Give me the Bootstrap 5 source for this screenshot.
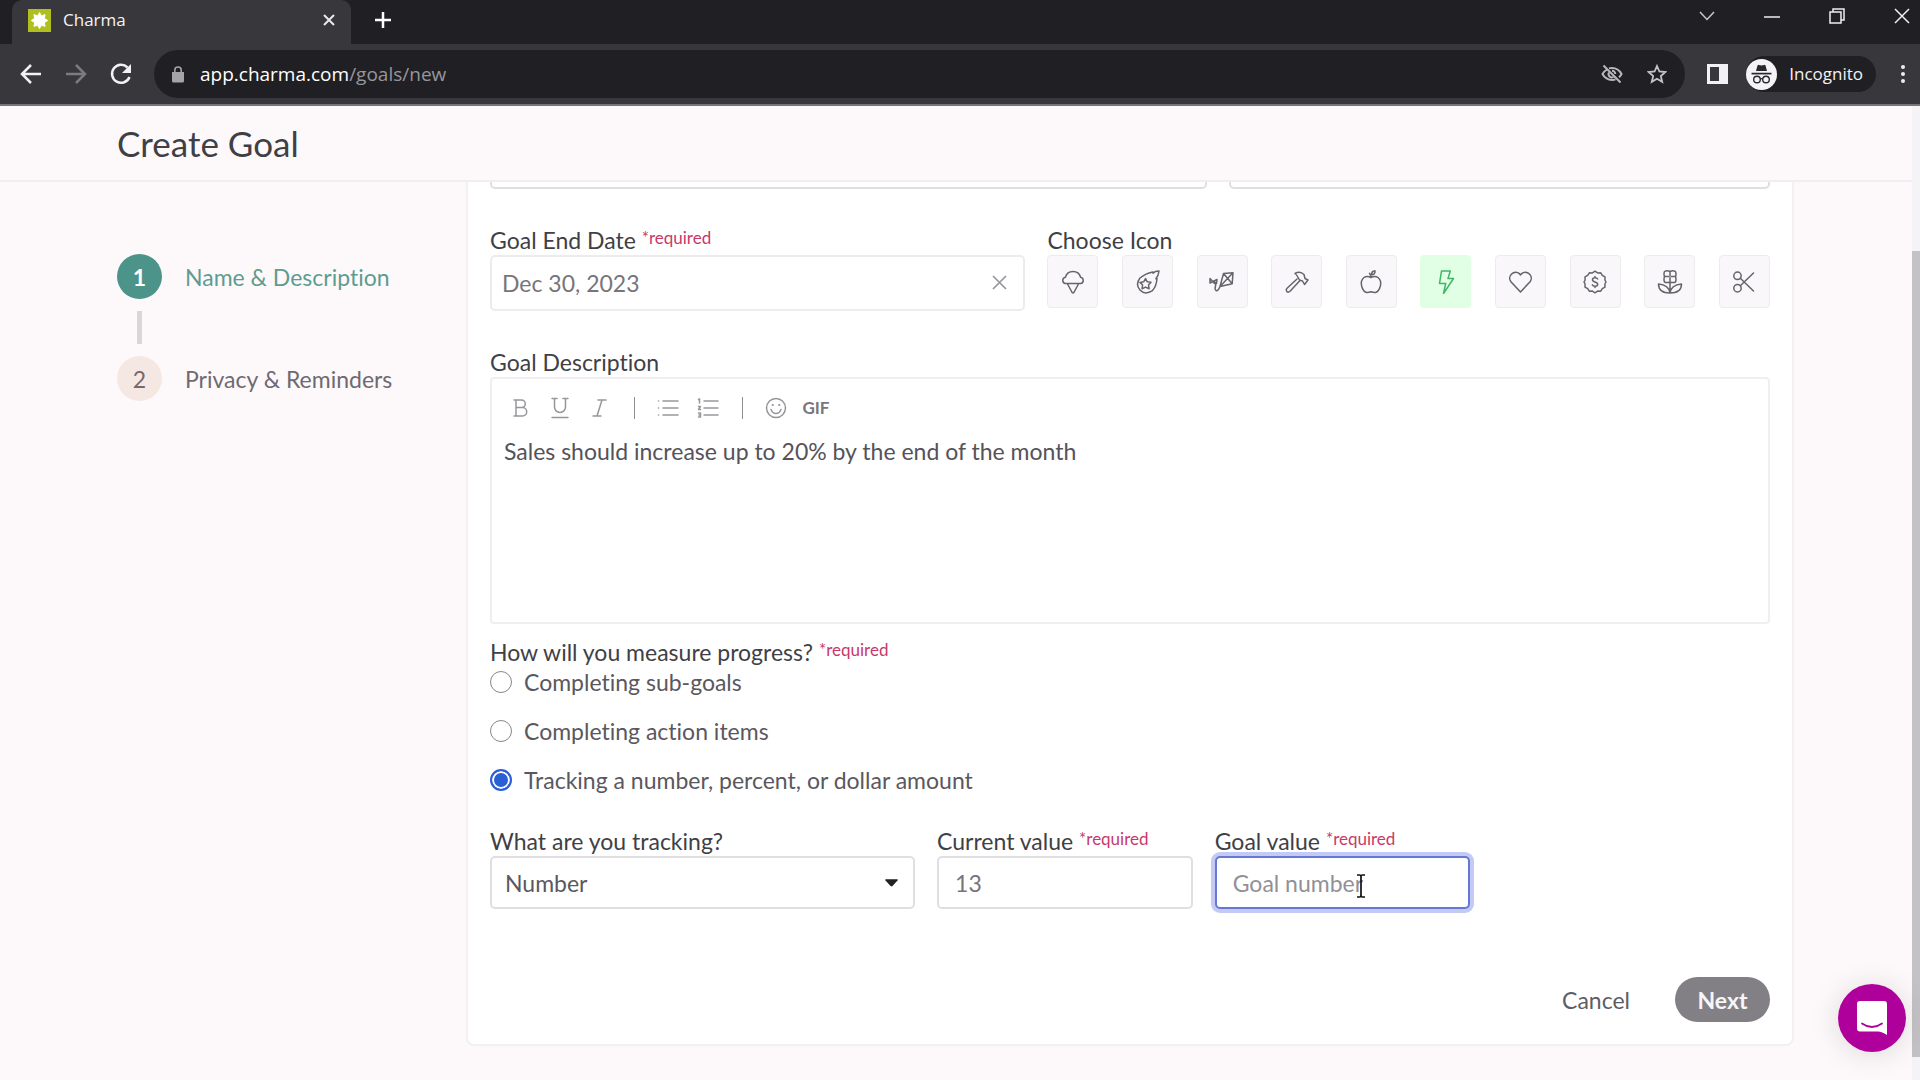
<!DOCTYPE html>
<html lang="en">
<head>
<meta charset="utf-8">
<meta name="viewport" content="width=device-width, initial-scale=1">
<title>Charma</title>
<link rel="stylesheet" href="https://cdn.jsdelivr.net/npm/bootstrap@5.3.0/dist/css/bootstrap.min.css">
<style>
  :root { --ink: #45434a; --muted-ink: #77757b; --line: #e6e3e7; --shell: #38373b; --dark: #202024; --paper: #fdf9fb; --teal: #4c9489; }
  body { font-family: Lato, "Noto Sans", sans-serif; font-size: 23px; line-height: 30px; font-variant-ligatures: none; color: var(--ink); background: var(--paper); }
  svg { display: block; flex: none; }
  .stroke { fill: none; stroke: currentColor; stroke-width: 1.5; stroke-linecap: round; stroke-linejoin: round; }
  .bare { background: none; border: 0; padding: 0; color: inherit; display: flex; align-items: center; justify-content: center; }
  .fill-rest { min-width: 0; min-height: 0; }

  /* browser frame */
  .chrome { font-family: "Open Sans", "Noto Sans", sans-serif; font-size: 17px; line-height: 24px; color: #f4f3f6; background: var(--shell); border-bottom: 2px solid #77757a; }
  .tabstrip { background: var(--dark); height: 44px; padding-left: 12px; }
  .tab-open { width: 339px; height: 44px; background: var(--shell); border-radius: 10px 10px 0 0; padding: 0 16px; padding-bottom: 4px; }
  .win-controls { gap: 49px; padding: 0 10px 12px 0; }
  .toolbar { height: 60px; padding: 0 8px 0 16px; }
  .nav-buttons { gap: 15px; }
  .omnibox { height: 48px; border-radius: 24px; background: var(--dark); padding: 0 18px; margin: 0 22px 0 18px; min-width: 0; }
  .address { font-size: 19px; color: #fff; }
  .address span { color: #97969b; }
  .profile { height: 36px; border-radius: 18px; background: var(--dark); padding-right: 13px; margin: 0 18px; gap: 12px; }

  /* page */
  .page-head { height: 77px; padding: 0 117px; border-bottom: 2px solid #f1edf0; background: var(--paper); z-index: 2; position: relative; }
  .page-head h1 { font-size: 35px; line-height: 40px; font-weight: 400; margin: 0; color: #413f46; }
  .page-body { padding: 0 118px 34px 117px; }
  .steps { width: 349px; padding-top: 72px; }
  .step-link { gap: 23px; color: #6f6a70; text-decoration: none; }
  .step-num { width: 45px; height: 45px; border-radius: 50%; background: #f5e7e2; color: #77686a; }
  .step-link.current { color: #5d9c91; }
  .step-link.current .step-num { background: var(--teal); color: #fff; font-weight: 700; }
  .step-bar { width: 5px; height: 33px; margin: 12px 20px; background: #d9d5d9; }

  .goal-card { border: 2px solid #f3f0f3; border-radius: 8px; background: #fff; padding: 22px; margin-top: -70px; min-width: 0; }
  .fields { display: grid; column-gap: 22px; }
  .fields-top { grid-template-columns: 716fr 541fr; margin-bottom: 36px; }
  .fields-date { grid-template-columns: 535fr 722fr; margin-bottom: 36px; }
  .fields-track { grid-template-columns: 424fr 255fr 255fr 277fr; margin-top: 31px; }
  .caption { display: block; height: 30px; font: inherit; white-space: nowrap; color: #413f46; margin: 0; }
  .caption em { font-style: normal; font-size: 17px; line-height: 17px; color: #c8396a; vertical-align: 5px; }
  .field { height: 53px; border: 2px solid #e1dee2; border-radius: 5px; font-size: 23px; line-height: 30px; padding: 0 16px; color: var(--muted-ink); background-color: #fff; }
  .field::placeholder { color: #929096; }
  .field-date { height: 56px; border-color: #eeebee; padding: 0 10px; }
  .field-pick { padding: 0 13px; color: #5a585e; --bs-form-select-bg-img: url("data:image/svg+xml,%3Csvg xmlns='http://www.w3.org/2000/svg' viewBox='0 0 14 8'%3E%3Cpath d='M1 0h12q1.300 .2.500 1.300L8 7.300q-1 .9-2 0L.5 1.300Q-.3.200 1 0z' fill='%23222'/%3E%3C/svg%3E"); background-size: 13px 8px; background-position: right 15px center; }
  .field-active, .field-active:focus { border-color: #6478d4; box-shadow: 0 0 0 4px #c3caf5; }
  .clear { position: absolute; right: 18px; top: 20px; color: #98969b; }
  .pointer { position: absolute; left: 141px; top: 18px; }

  .icon-pick { width: 51px; height: 53px; border: 1px solid #eeebef; border-radius: 4px; background: #f9f7fa; color: #66646a; }
  .icon-pick.on { background: #e0ffe5; border-color: #e0ffe5; color: #3fb765; }

  .editor { border: 2px solid #f1eef1; border-radius: 4px; min-height: 247px; margin-bottom: 13px; }
  .tools { height: 57px; padding-left: 8px; color: #98969b; }
  .tool { width: 40px; height: 32px; font-size: 17px; line-height: 22px; font-weight: 700; }
  .tool-gif { color: #77757b; }
  .tool-gap { width: 28px; height: 22px; }
  .tool-gap::after { content: ""; display: block; width: 1px; height: 22px; margin: 0 auto; background: #908e93; }
  .editor textarea { display: block; border: 0; resize: none; padding: 0 12px; height: 180px; width: 100%; font: inherit; color: #555359; background: none; outline: 0; }

  .choice { height: 30px; gap: 12px; color: #5a585e; }
  .choice + .choice { margin-top: 19px; }
  .choice input { appearance: none; width: 22px; height: 22px; margin: 0; border: 1px solid #88868b; border-radius: 50%; background: #fff; }
  .choice input:checked { border: 2px solid #2a5fd6; background: #2a5fd6; box-shadow: inset 0 0 0 2px #fff; }

  .actions { gap: 45px; margin-top: 68px; }
  .btn-plain { color: #5f5d63; }
  .btn-next { width: 95px; height: 45px; border-radius: 23px; background: #828085; color: #f6f5f7; font-weight: 700; }
  .chat { position: fixed; right: 14px; bottom: 28px; width: 68px; height: 68px; border-radius: 50%; background: #b0009b; box-shadow: 0 2px 30px rgba(0,0,0,.13); }
  .rail { width: 9px; background: #f5f3f5; padding: 145px 0 23px; }
  .rail-thumb { width: 8px; background: #c4c2c5; margin-left: auto; }
</style>
<script src="https://cdn.jsdelivr.net/npm/bootstrap@5.3.0/dist/js/bootstrap.bundle.min.js"></script>
</head>
<body class="vh-100 d-flex flex-column overflow-hidden">

<header class="chrome">
  <div class="tabstrip d-flex justify-content-between">
    <div class="d-flex align-items-center">
      <div class="tab-open d-flex align-items-center">
        <svg width="23" height="23" viewBox="0 0 23 23"><rect width="23" height="23" fill="#aebf1e"/><path d="M11.500 3.500l1.900 3.400 3.700-1.300-.8 3.700 3.400 2.200-3.400 2.100.8 3.700-3.700-1-1.900 3.300-1.900-3.300-3.700 1 .8-3.700-3.400-2.100 3.400-2.200-.8-3.700 3.700 1.300z" fill="#fff" stroke="#fff" stroke-linejoin="round"/></svg>
        <span class="ms-2 ps-1 flex-grow-1">Charma</span>
        <button class="bare" aria-label="Close tab"><svg width="12" height="12" viewBox="0 0 12 12" stroke="#e9e8ec" stroke-width="2"><path d="M1 1l10 10M11 1L1 11"/></svg></button>
      </div>
      <button class="bare ms-4 pb-1" aria-label="New tab"><svg width="16" height="16" viewBox="0 0 16 16" stroke="#fff" stroke-width="2.500"><path d="M8 0v16M0 8h16"/></svg></button>
    </div>
    <div class="win-controls d-flex align-items-center">
      <button class="bare" aria-label="Search tabs"><svg width="16" height="10" viewBox="0 0 16 10" fill="none" stroke="#c9c8cc" stroke-width="1.500"><path d="M1 1l7 7.500L15 1"/></svg></button>
      <button class="bare" aria-label="Minimise"><svg width="16" height="10" viewBox="0 0 16 10" stroke="#eee" stroke-width="1.500"><path d="M0 6h16"/></svg></button>
      <button class="bare" aria-label="Restore"><svg width="16" height="16" viewBox="0 0 16 16" fill="none" stroke="#eee" stroke-width="1.500"><path d="M1 4h11v11H1zM4 4V1h11v11h-3"/></svg></button>
      <button class="bare" aria-label="Close"><svg width="16" height="16" viewBox="0 0 16 16" stroke="#eee" stroke-width="1.500"><path d="M1 1l14 14M15 1L1 15"/></svg></button>
    </div>
  </div>
  <div class="toolbar d-flex align-items-center">
    <div class="nav-buttons d-flex align-items-center">
      <button class="bare" aria-label="Back"><svg width="30" height="30" viewBox="0 0 30 30" fill="none" stroke="#f2f1f4" stroke-width="2.500"><path d="M25 15H7M15 6l-9 9 9 9"/></svg></button>
      <button class="bare" aria-label="Forward"><svg width="30" height="30" viewBox="0 0 30 30" fill="none" stroke="#7c7b80" stroke-width="2.500"><path d="M5 15h18M15 6l9 9-9 9"/></svg></button>
      <button class="bare" aria-label="Reload"><svg width="30" height="30" viewBox="0 0 30 30" fill="none" stroke="#f2f1f4" stroke-width="2.500"><path d="M23.500 18a9 9 0 1 1-2-9.500"/><path d="M25 5v9h-9z" fill="#f2f1f4" stroke="none"/></svg></button>
    </div>
    <div class="omnibox d-flex align-items-center flex-grow-1">
      <svg width="12" height="17" viewBox="0 0 12 17"><path d="M0 6h12v9q0 1.500-1.500 1.500h-9Q0 16.500 0 15z" fill="#a5a4a9"/><path d="M2.800 7V4.200a3.200 3.200 0 0 1 6.400 0V7" fill="none" stroke="#a5a4a9" stroke-width="1.600"/></svg>
      <div class="address flex-grow-1 ms-3">app.charma.com<span>/goals/new</span></div>
      <div class="d-flex align-items-center gap-4">
        <button class="bare" aria-label="Third-party cookies blocked"><svg width="22" height="20" viewBox="0 0 22 20" fill="none" stroke="#b9b8bd" stroke-width="2"><path d="M6 5.500Q3 7.300 1.500 10q3.300 6 9.500 6 2 0 3.500-.6M8 4.400Q9.500 4 11 4q6.200 0 9.500 6-1 2-2.500 3.300"/><path d="M8 8.500a3.300 3.300 0 0 0 4.500 4.500M11 6.700a3.300 3.300 0 0 1 3.300 3.300"/><path d="M2.500 1.500l17 17"/></svg></button>
        <button class="bare" aria-label="Bookmark"><svg width="20" height="20" viewBox="0 0 20 20" fill="none" stroke="#c4c3c8" stroke-width="1.800"><path d="M10 2l2.400 5.500 6 .5-4.600 4 1.400 5.800L10 14.700l-5.200 3.100L6.200 12 1.600 8l6-.5z"/></svg></button>
      </div>
    </div>
    <button class="bare" aria-label="Side panel"><svg width="21" height="20" viewBox="0 0 21 20"><path fill="#f2f1f4" fill-rule="evenodd" d="M0 0h21v20H0zM3 3v14h9V3z"/></svg></button>
    <div class="profile d-flex align-items-center">
      <svg width="31" height="31" viewBox="0 0 31 31"><circle cx="15.500" cy="15.500" r="15.500" fill="#f4f3f8"/><path d="M11.500 6.500q.4-.9 1.300-.6l2.700.7 2.700-.7q.9-.3 1.300.6l1.500 5.500H10z" fill="#29282d"/><path d="M5.500 14.600h20" stroke="#29282d" stroke-width="1.700"/><g fill="none" stroke="#29282d" stroke-width="1.400"><circle cx="11" cy="20.500" r="3.300"/><circle cx="20" cy="20.500" r="3.300"/><path d="M14.300 20q1.200-.7 2.400 0"/></g></svg>
      <span>Incognito</span>
    </div>
    <button class="bare" aria-label="Menu"><svg width="18" height="20" viewBox="0 0 18 20" fill="#eeedf1"><circle cx="9" cy="3" r="2"/><circle cx="9" cy="10" r="2"/><circle cx="9" cy="17" r="2"/></svg></button>
  </div>
</header>

<div class="fill-rest d-flex flex-grow-1">
  <div class="fill-rest flex-grow-1 d-flex flex-column">
    <div class="page-head d-flex align-items-center"><h1>Create Goal</h1></div>
    <main class="page-body d-flex align-items-start">
      <nav class="steps flex-shrink-0" aria-label="Steps">
        <a class="step-link current d-flex align-items-center" href="#"><span class="step-num d-flex align-items-center justify-content-center">1</span>Name &amp; Description</a>
        <div class="step-bar"></div>
        <a class="step-link d-flex align-items-center" href="#"><span class="step-num d-flex align-items-center justify-content-center">2</span>Privacy &amp; Reminders</a>
      </nav>

      <form class="goal-card flex-grow-1">
        <div class="fields fields-top">
          <input class="form-control field" type="text" aria-label="Goal name">
          <input class="form-control field" type="text" aria-label="Goal owner">
        </div>

        <div class="fields fields-date">
          <div>
            <label class="caption" for="end">Goal End Date <em>*required</em></label>
            <div class="position-relative">
              <input class="form-control field field-date" id="end" type="text" value="Dec 30, 2023">
              <button type="button" class="bare clear" aria-label="Clear date"><svg width="15" height="15" viewBox="0 0 15 15" stroke="currentColor" stroke-width="1.700"><path d="M1 1l13 13M14 1L1 14"/></svg></button>
            </div>
          </div>
          <div>
            <div class="caption">Choose Icon</div>
            <div class="d-flex justify-content-between">
              <button type="button" class="bare icon-pick" aria-label="Ice cream"><svg class="stroke" width="24" height="24" viewBox="0 0 24 24"><path d="M4 13.500a3.200 3.200 0 0 1 .4-6.200Q6 1.500 12 1.500t7.600 5.800a3.200 3.200 0 0 1 .4 6.200zM6.300 13.500l4.800 9q.9 1 1.800 0l4.800-9"/></svg></button>
              <button type="button" class="bare icon-pick" aria-label="Comet"><svg class="stroke" width="26" height="26" viewBox="0 0 26 26"><path d="M24 2q-4.500.3-6 2.200l-.3-1.300Q10 4.500 5 9q-5 6.500 0 12t12.500.6Q21.500 17 22 9.500l-1.200.2Q23.500 7 24 2z"/><path d="M10.500 9.500l1.800 3.300 3.700.5-2.500 2.700.6 3.700-3.600-1.600-3.400 1.600.5-3.700L5 13.400l3.700-.6z"/></svg></button>
              <button type="button" class="bare icon-pick" aria-label="Kite"><svg class="stroke" width="26" height="26" viewBox="0 0 26 26"><path d="M14.500 4.500l9.500-.8-.8 11L11 17.500zM11 17.500L24 3.700M14.500 4.500l8.700 10.200M11 17.500q-2 5-4 4-1.500-1.300-.5-4.500t-2-5M5.500 14.500L1 9.500v4.500l7-3.500-.5 4z"/></svg></button>
              <button type="button" class="bare icon-pick" aria-label="Hammer"><svg class="stroke" width="26" height="26" viewBox="0 0 26 26"><path d="M11 4.500q5-3 9 1l1 4 3 1.500-3.500 4.500-2-3.500-3-1-2-3.500q-1-2-2.500-3zM13 10L2.800 19.500q-1.300 1.700 0 3t3 0L15.500 12"/></svg></button>
              <button type="button" class="bare icon-pick" aria-label="Apple"><svg class="stroke" width="24" height="24" viewBox="0 0 24 24"><path d="M12 7.500Q8 5.500 5 7.500 1.500 10.300 2.500 15.500 4 21.500 7.500 22.500q1.500.3 4.500-.7 3 1 4.500.7 3.500-1 5-7Q22.500 10.300 19 7.500q-3-2-7 0zM12 7.300Q11.500 4 10.500 3.300M12.500 4.800Q12.500 1 16 .8q.3 3.700-3.500 4z"/></svg></button>
              <button type="button" class="bare icon-pick on" aria-label="Bolt" aria-pressed="true"><svg class="stroke" width="24" height="24" viewBox="0 0 24 24"><path d="M7.500 1h8.800l-2.300 7.500h5.500L9.500 23.500l2.200-10H5.500z"/></svg></button>
              <button type="button" class="bare icon-pick" aria-label="Heart"><svg class="stroke" width="25" height="25" viewBox="0 0 24 24"><path d="M12 22L2.800 12.300A5.700 5.700 0 0 1 11 4.500l1 1.200 1-1.200a5.700 5.700 0 0 1 8.200 7.800z"/></svg></button>
              <button type="button" class="bare icon-pick" aria-label="Dollar badge"><svg class="stroke" width="24" height="24" viewBox="0 0 24 24"><path d="M12 1.200l2.600 1.700 3.100-.1 1.600 2.600 2.700 1.500-.1 3.100L23 12l-1.100 2 .1 3.100-2.700 1.500-1.600 2.600-3.100-.1L12 22.800l-2.600-1.700-3.100.1-1.600-2.600L2 17.100 2.100 14 1 12l1.100-2L2 6.900l2.700-1.500 1.600-2.600 3.100.1z"/><path d="M14.700 9q-.7-1.300-2.700-1.300-2.500 0-2.500 2 0 1.600 2.500 2.200t2.700 2.300q0 2-2.700 2-2 0-2.700-1.400M12 6.500v1.200M12 16.300v1.200"/></svg></button>
              <button type="button" class="bare icon-pick" aria-label="Tulip"><svg class="stroke" width="26" height="26" viewBox="0 0 26 26"><path d="M13 2.500Q10 .8 7.500 2.500q-1 2.500 0 5-1 3 0 5.500 2.500 1.200 5.500 0 3 1.200 5.500 0 1-2.500 0-5.500 1-2.500 0-5Q16 .8 13 2.500zM13 2.500V7M13 8.500V12M8 7.500h3.500M14.500 7.500H18M13 13.500V24M13 24Q12 16 1.500 15 1.500 24 13 24M13 24q1-8 11.500-9Q24.500 24 13 24"/></svg></button>
              <button type="button" class="bare icon-pick" aria-label="Scissors"><svg class="stroke" width="24" height="24" viewBox="0 0 24 24"><circle cx="5.500" cy="5.800" r="3.700"/><circle cx="5.500" cy="18.200" r="3.700"/><path d="M8.300 8.200L21.500 21M8.300 15.800L21.500 3"/></svg></button>
            </div>
          </div>
        </div>

        <label class="caption" for="desc">Goal Description</label>
        <div class="editor">
          <div class="tools d-flex align-items-center">
            <button type="button" class="bare tool" aria-label="Bold"><svg class="stroke" width="22" height="22" viewBox="0 0 22 22"><path d="M5 3h7.500a3.800 3.800 0 0 1 0 7.600H7M7 10.600h6.500a4.200 4.200 0 0 1 0 8.400H5M7 3v16"/></svg></button>
            <button type="button" class="bare tool" aria-label="Underline"><svg class="stroke" width="22" height="22" viewBox="0 0 22 22"><path d="M3 1.500h5M14 1.500h5M5.500 1.500V10a5.500 5.500 0 0 0 11 0V1.500M3 20.500h16"/></svg></button>
            <button type="button" class="bare tool" aria-label="Italic"><svg class="stroke" width="22" height="22" viewBox="0 0 22 22"><path d="M9 3h8M4 19h8M13 3L8 19"/></svg></button>
            <span class="tool-gap"></span>
            <button type="button" class="bare tool" aria-label="Bulleted list"><svg class="stroke" width="22" height="22" viewBox="0 0 22 22"><path d="M6 4h15M6 11h15M6 18h15M1.500 4h.1M1.500 11h.1M1.500 18h.1"/></svg></button>
            <button type="button" class="bare tool" aria-label="Numbered list"><svg class="stroke" width="22" height="22" viewBox="0 0 22 22"><path d="M7 4h14M7 11h14M7 18h14M1.500 2.500l1-.7V6M1.500 9.500h2L1.500 12.500h2M1.500 16h2v4h-2M2 18h1.500"/></svg></button>
            <span class="tool-gap"></span>
            <button type="button" class="bare tool" aria-label="Emoji"><svg class="stroke" width="22" height="22" viewBox="0 0 22 22"><circle cx="11" cy="11" r="9.500"/><path d="M6 12.500q1.500 4 5 4t5-4"/><path d="M7.700 8h.1M14.200 8h.1" stroke-width="2.200"/></svg></button>
            <button type="button" class="bare tool tool-gif">GIF</button>
          </div>
          <textarea id="desc">Sales should increase up to 20% by the end of the month</textarea>
        </div>

        <fieldset>
          <legend class="caption">How will you measure progress? <em>*required</em></legend>
          <label class="choice d-flex align-items-center"><input type="radio" name="measure">Completing sub-goals</label>
          <label class="choice d-flex align-items-center"><input type="radio" name="measure">Completing action items</label>
          <label class="choice d-flex align-items-center"><input type="radio" name="measure" checked>Tracking a number, percent, or dollar amount</label>
        </fieldset>

        <div class="fields fields-track">
          <div>
            <label class="caption" for="kind">What are you tracking?</label>
            <select class="form-select field field-pick" id="kind"><option>Number</option><option>Percent</option><option>Dollar amount</option></select>
          </div>
          <div>
            <label class="caption" for="now">Current value <em>*required</em></label>
            <input class="form-control field" id="now" type="text" value="13">
          </div>
          <div>
            <label class="caption" for="target">Goal value <em>*required</em></label>
            <div class="position-relative">
              <input class="form-control field field-active" id="target" type="text" placeholder="Goal number">
              <svg class="pointer" width="10" height="24" viewBox="0 0 10 24" fill="none" stroke="#111" stroke-width="1.700"><path d="M1 1h2.500Q5 1 5 2.500 5 1 6.500 1H9M5 2.500v19M1 23h2.500Q5 23 5 21.500 5 23 6.500 23H9"/></svg>
            </div>
          </div>
        </div>

        <div class="actions d-flex align-items-center justify-content-end">
          <button type="button" class="bare btn-plain">Cancel</button>
          <button type="submit" class="bare btn-next">Next</button>
        </div>
      </form>
    </main>
  </div>
  <div class="rail d-flex" aria-hidden="true"><div class="rail-thumb"></div></div>
</div>

<button class="bare chat" aria-label="Open chat"><svg width="32" height="36" viewBox="0 0 32 36"><path d="M4 1h24q3 0 3 3v31q-5-3.500-9-3.500H4q-3 0-3-3V4q0-3 3-3z" fill="#fff"/><path d="M6 23.500q10 7 20 0" fill="none" stroke="#b0009b" stroke-width="1.800" stroke-linecap="round"/></svg></button>
</body>
</html>
